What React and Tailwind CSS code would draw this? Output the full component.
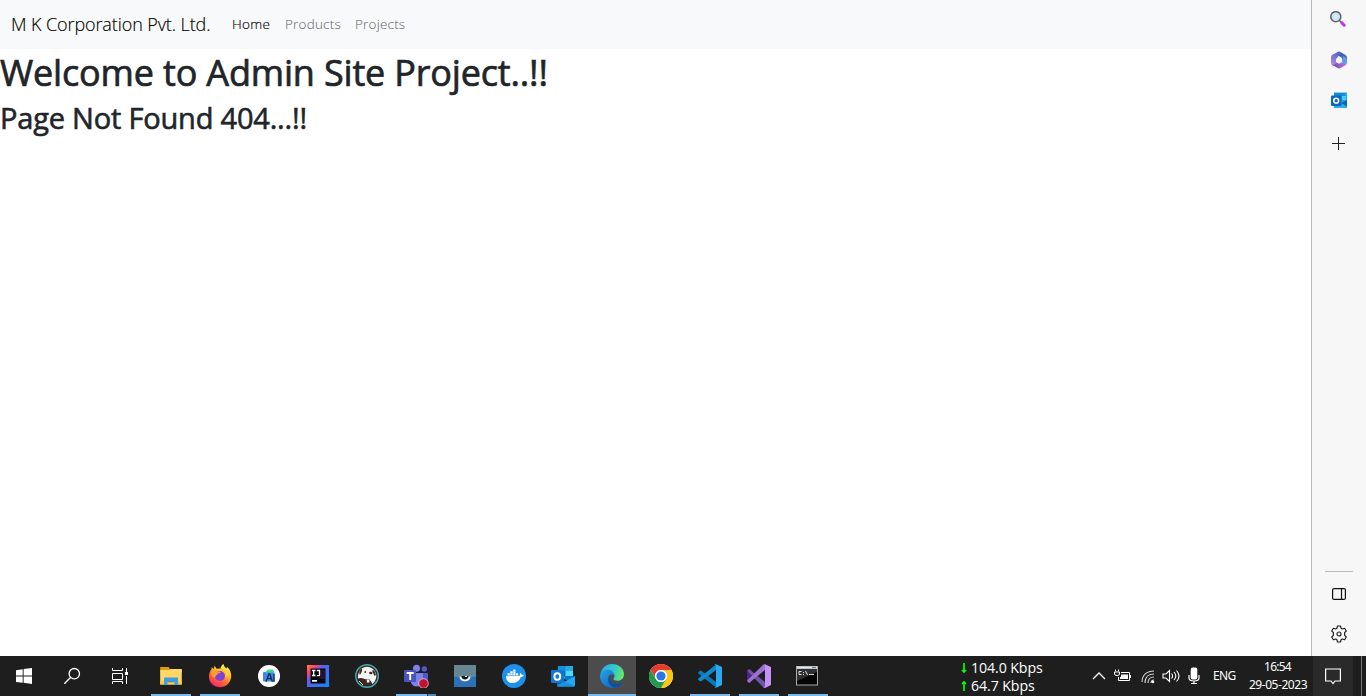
import React from 'react';

function Svg({ children, className = 'w-6 h-6', box = '0 0 24 24' }) {
  return <svg className={`block shrink-0 ${className}`} viewBox={box} fill="none">{children}</svg>;
}

const WindowsLogo = () => (
  <Svg><path fill="#fff" d="M4 6.2 10.7 5.2V11.5H4zM11.6 5.1 20 4v7.5h-8.4zM4 12.5h6.7v6.3L4 17.9zM11.6 12.5H20V20l-8.4-1.2z" /></Svg>
);
const SearchGlyph = () => (
  <Svg><circle cx="14.3" cy="9.7" r="5.2" stroke="#fff" strokeWidth="1.3" /><path d="M10.5 13.5 4.3 19.7" stroke="#fff" strokeWidth="1.4" /></Svg>
);
const TaskView = () => (
  <Svg><path stroke="#fff" d="M4.5 4v2.5h10V4M4.5 9.5h10v6h-10zM4.5 20v-2.500h10V20M18.500 4v4M18.500 12v8" /><path fill="#fff" d="M17 8h3v3h-3z" /></Svg>
);
const Explorer = () => (
  <Svg>
    <path fill="#e29b08" d="M1.200 3h8.500l1.500 2.500H23v3H1.200z" />
    <path fill="#ffd767" d="M1.200 6h9l1.500-1H22.800v15.500H1.200z" />
    <path fill="#f9c94b" d="M1.200 17h21.600v3.500H1.200z" />
    <path fill="#3f9de0" d="M5 13.500h14V21h-3.500v-3.800h-7V21H5z" />
    <path fill="#2a7dc5" d="M8.500 17.200h7v1h-7z" />
  </Svg>
);
const Firefox = () => (
  <Svg>
    <defs>
      <linearGradient id="ffBody" x1="18" y1="2" x2="6" y2="23" gradientUnits="userSpaceOnUse"><stop stopColor="#fff04a" /><stop offset=".35" stopColor="#ffb12b" /><stop offset=".65" stopColor="#ff6037" /><stop offset="1" stopColor="#f0207a" /></linearGradient>
      <radialGradient id="ffCore"><stop stopColor="#6a4be0" /><stop offset="1" stopColor="#8c3bd8" /></radialGradient>
    </defs>
    <path fill="url(#ffBody)" d="M12.500 4.500C13 2 14.500.600 15.600 0c.2 2 1.200 3 2.800 4.500.5-.4.600-1.200.500-1.800 3 2.300 4.500 6 4.300 9.800C22.900 18.600 18 23.200 12 23.200S1 18.700 1 12.700C1 9.500 2 7 3.400 5.300L3.700 3l1.800 2 1.300-3.300 1.700 3.100z" />
    <circle cx="12" cy="12" r="5" fill="url(#ffCore)" />
    <path fill="#ff9a2e" d="M3 8c3-2.500 5.300-1.500 6.500-.5 1.700-.2 3 .2 3.500 1.200-2 .4-3.500.7-3.700 1.700-1.200.5-2 1.600-2 3L4 13z" />
    <path fill="#ffd43c" d="M13 4.500c5 1.500 6 5.500 4 9 2-.7 2.700-2 3-3.500-.2-3-2.500-5-7-5.500z" />
  </Svg>
);
const AndroidStudio = () => (
  <Svg>
    <circle cx="12" cy="12" r="11" fill="#fff" />
    <rect x="6" y="8" width="11.500" height="9.500" rx="1" fill="#4285f4" />
    <path fill="#35d983" d="M8.500 8.800C9 6.800 10.400 5.700 12.400 5.600l3.300-.1c.8 1 1.400 2 1.600 3.300z" />
    <path stroke="#073042" strokeWidth="1.300" d="m9 17.700 3-8h.7l2.700 8M10.300 14.700h4.100M17 10v8" />
  </Svg>
);
const IntelliJ = () => (
  <Svg>
    <defs><linearGradient id="ij" x1="1" y1="1" x2="23" y2="22" gradientUnits="userSpaceOnUse"><stop stopColor="#ff8a2b" /><stop offset=".22" stopColor="#ff3e76" /><stop offset=".4" stopColor="#5b60f0" /><stop offset="1" stopColor="#0b87fc" /></linearGradient></defs>
    <path fill="url(#ij)" d="M1 1h22v22H1z" /><path fill="#08070c" d="M4.500 4.500h15v15h-15z" /><path fill="#2a1030" d="M13 6h6v9h-6z" />
    <path stroke="#fff" strokeWidth="1.300" d="M6 6.500h3.500M7.700 6.500V12M6 11.500h3.500M10.800 6.500h2.700V11q0 .7-1 .7h-1.700" /><path fill="#fff" d="M6 16h5v1.700H6z" />
  </Svg>
);
const DBeaver = () => (
  <Svg>
    <circle cx="12" cy="12" r="11.300" fill="#382923" stroke="#45a9b2" strokeWidth="1.400" />
    <path fill="#f4f4f2" d="M3 14.500C2.500 10 4.500 5.500 8 3.700c4-2 7.500-1 10 1.300 2.500 2 3.600 5 3.300 8-.5 3-1.800 5.300-3.800 7-1-2.200-2.200-3.500-3.500-5-1.200.2-2.700.5-4.200 0C7.300 13.800 5 13.500 3 14.500z" />
    <path fill="#382923" d="M4.800 10.800C3.500 9 4.400 6.200 6.700 4.800c1 1 .4 2.200-.2 3.200-.5 1-.7 2-1.700 2.800zM17.500 5.700c2 .8 3.300 3 3.300 5.200-.6 1.200-1.500 1-2-.1-.4-1-.3-2-1.300-2.800z" />
    <circle cx="10.300" cy="8" r=".9" fill="#382923" /><ellipse cx="15.800" cy="9" rx="1.700" ry="1.300" fill="#382923" />
    <path fill="#fff" d="m6 18 3 3M11.800 15.500h2.600v3h-2.600z" /><path stroke="#eee" strokeWidth=".9" d="m4 17 4 4" />
  </Svg>
);
const Teams = () => (
  <Svg className="w-[26px] h-6" box="0 0 26 24">
    <circle cx="13.500" cy="4.300" r="3.500" fill="#7b83eb" /><circle cx="21.300" cy="5" r="2.700" fill="#5059c9" />
    <path fill="#5059c9" d="M18 9h6q1 0 1 1v6q-1 4-6 4z" /><path fill="#7b83eb" d="M8 9h12v8.500q-1.500 5-6.500 5-4 0-5.500-4z" />
    <rect x="1" y="6" width="12" height="12" rx="1" fill="#4b53bc" /><path stroke="#fff" strokeWidth="1.900" d="M3.700 9h7M7.200 9v7" />
    <circle cx="20.500" cy="19.500" r="4.800" fill="#c50f2f" stroke="#e8cfd7" strokeWidth=".8" />
  </Svg>
);
const Kitematic = () => (
  <Svg>
    <path fill="#668792" d="M1 1h22v11H1z" /><path fill="#2c70b7" d="M1 12h22v11H1z" /><path fill="#4685b8" d="M1 12h22v1H1z" />
    <path fill="#fff" d="M6.500 12.500h11c0 3-2.300 4.800-5.500 4.800s-5.500-1.800-5.500-4.800z" /><path fill="#111b24" d="M8.500 12h7c.2 2.200-1.200 3.500-3.500 3.500S8.300 14.200 8.500 12z" /><path fill="#fff" d="M12 12h2v1h-2z" />
  </Svg>
);
const Docker = () => (
  <Svg>
    <circle cx="12" cy="12" r="12" fill="#1d90ed" />
    <path fill="#fff" d="M4 12h13c1-.3 1.500-1.800.8-3.200.8.3 1.500 1 1.700 2 .8-.1 1.800 0 2.400.5-.6 1.300-1.800 1.700-3 1.600C17.300 17 14.300 19 10.500 19 6.500 19 4 16.500 4 12zM5.500 9.300h2.400v2.300H5.500zM8.300 9.300h2.400v2.300H8.300zM11.100 9.300h2.400v2.300h-2.400zM13.900 9.300h2.400v2.300h-2.400zM8.300 7.300h2.400V9H8.300zM11.100 7.300h2.400V9h-2.400zM11.100 5.500h2.400v1.500h-2.400z" />
    <path stroke="#7cc1f7" strokeWidth=".4" d="M5.500 11.700h10.800M8.100 9.300v2.400M10.900 7.500v4.200M13.700 9.300v2.400" />
  </Svg>
);
const Outlook = ({ className }) => (
  <Svg className={className}>
    <path fill="#1490df" d="M7 2h15v13H7z" /><path fill="#28a8ea" d="M14.500 2H22v5h-7.500z" /><path fill="#0364b8" d="M7 7h7.500v5H7z" /><path fill="#50d9ff" d="M14.500 7H22v5h-7.500z" /><path fill="#0078d4" d="M14.500 12H22v4h-7.500z" />
    <path fill="#1268ad" d="m6 12 9 6 9-6v10H6z" /><path fill="#28a8ea" d="M6 22 24 12v9q0 1.500-1.500 1.500h-15Q6 22.500 6 22z" /><path fill="#1595dd" d="m14 17.500 10 4.500q-.5.500-1.500.5h-15z" />
    <rect y="6" width="13" height="13" rx="1" fill="#0f78d4" /><ellipse cx="6.300" cy="12.500" rx="2.900" ry="3.200" stroke="#fff" strokeWidth="2" />
  </Svg>
);
const OutlookSmall = () => (
  <Svg className="w-4 h-[17px]" box="0 0 16 17">
    <path fill="#26a5e6" d="M3 .5h13V16H3z" /><path fill="#158bd5" d="M3 1h11v3H3z" /><path fill="#45d0f8" d="M11 4h4v4h-4z" />
    <path fill="#0f66b0" d="m10 11 6-3v7z" /><path fill="#28aeea" d="M3 16v-2l7-3 6 3.500V16z" />
    <rect y="3.500" width="10.500" height="10.500" rx="1" fill="#0869bd" /><circle cx="5.200" cy="8.700" r="2.400" stroke="#fff" strokeWidth="1.500" />
  </Svg>
);
const Edge = () => (
  <Svg>
    <defs>
      <linearGradient id="eTop" x1="1" y1="6" x2="24" y2="12" gradientUnits="userSpaceOnUse"><stop stopColor="#2baee7" /><stop offset=".5" stopColor="#31c5d4" /><stop offset="1" stopColor="#6bea5c" /></linearGradient>
      <linearGradient id="eLow" x1="1" y1="9" x2="16" y2="24" gradientUnits="userSpaceOnUse"><stop stopColor="#249ae2" /><stop offset="1" stopColor="#0b65bc" /></linearGradient>
    </defs>
    <path fill="url(#eTop)" d="M.500 10C1.500 4.200 6.200 0 12 0c7 0 12 4.800 12 10.200 0 4-2.800 6.500-6.500 6.500-2.400 0-4.100-.8-4.100-1.700 0-.7 1.100-1.200 1.100-3C14.500 9.500 12.500 7.500 9 7.500z" />
    <path fill="url(#eLow)" d="M0 12C.4 8.300 3.500 5.800 7.500 5.800c4 0 7 2.500 7 6.200-.7-1-2-1.700-3.200-1.500C8.600 11 8.700 14 10 16.200c2.500 4 8 4.700 12 2.500.5-.3 1 0 .7.600C20.500 22.200 16.500 24 12.500 24 5.500 24 0 18.500 0 12z" />
    <path fill="#154f9b" d="M10.800 10.500C7 12 7.200 19 11.500 22c1.200 1 2.500 1.500 4 1.600 3-.6 5.500-2 7-4.200.3-.6-.2-.9-.7-.6-4 1.900-8.800 1.200-11.300-2.300-1.500-2.300-1.300-5 .3-6z" />
  </Svg>
);
const Chrome = () => (
  <Svg>
    <circle cx="12" cy="12" r="12" fill="#fff" />
    <path fill="#e63b2e" d="M1.600 6A12 12 0 0 1 22.400 6H12A6 6 0 0 0 6.800 15z" />
    <path fill="#fbc616" d="M22.400 6A12 12 0 0 1 12 24l5.200-9A6 6 0 0 0 12 6z" />
    <path fill="#239b4a" d="M12 24A12 12 0 0 1 1.600 6l5.200 9A6 6 0 0 0 17.200 15z" />
    <circle cx="12" cy="12" r="6" fill="#fff" /><circle cx="12" cy="12" r="4.600" fill="#2878e8" />
  </Svg>
);
const VSCode = () => (
  <Svg>
    <path fill="#0879bd" d="M.300 8.200 2 6.700q.700-.500 1.300 0L18 18v5.500L.300 9.500q-.600-.700 0-1.300z" />
    <path fill="#1187ce" d="M.300 15.800 2 17.300q.700.500 1.300 0L18 6V.5L.300 14.500q-.600.700 0 1.300z" />
    <path fill="#2aa8f2" d="M18 .2 24 3v18l-6 2.800c-.7.200-1 .1-1.500-.3.900.2 1.500-.3 1.500-1.200V1.700c0-.9-.6-1.400-1.500-1.200.4-.4.900-.5 1.500-.3z" />
  </Svg>
);
const VisualStudio = () => (
  <Svg>
    <path fill="#52218a" d="m0 6 2-1 2.500 1.200V18L2 19l-2-1z" />
    <path fill="#7252aa" d="m2 5 16 13v5.500q-1 .500-1.800-.200L.800 7.500z" />
    <path fill="#9a71d0" d="M2 19 18 6V.5q-1-.500-1.800.2L0 16.500z" />
    <path fill="#c391f7" d="m18 .2 6 2.700v18.200L18 24q-1 .200-1.700-.6c1 .2 1.700-.3 1.700-1.300V1.900c0-1-.7-1.500-1.700-1.300Q17 0 18 .200z" />
  </Svg>
);
const Terminal = () => (
  <Svg className="mr-0.5 w-6 h-6">
    <path fill="#a5aab1" d="M1 2h22v19.500H1z" /><path fill="#dfe3e8" d="M2 2.500h20v2H2z" /><path fill="#68788e" d="M17 3h4v1h-4z" /><path fill="#050505" d="M2 5h20v15.500H2z" /><path fill="#303030" d="M2 5h20v3L2 17z" />
    <path stroke="#eee" strokeWidth=".9" d="M6.500 7.500H4v3h2.500M8.500 8v1M8.500 10v1M10.500 7l2 4M14 10.500h5" />
  </Svg>
);

const apps = [
  [Explorer, 1], [Firefox, 1], [AndroidStudio, 0], [IntelliJ, 0], [DBeaver, 0], [Teams, 3], [Kitematic, 0],
  [Docker, 0], [Outlook, 0], [Edge, 2], [Chrome, 0], [VSCode, 1], [VisualStudio, 1], [Terminal, 1],
];

function Taskbar() {
  return (
    <footer className="flex h-10 shrink-0 bg-[#1e1e1e] font-['Noto_Sans',sans-serif] text-white whitespace-nowrap">
      {[WindowsLogo, SearchGlyph, TaskView].map((I, i) => <button key={i} className="flex w-12 items-center justify-center"><I /></button>)}
      <div className="flex gap-px pl-[3px]">
        {apps.map(([Icon, state], i) => (
          <button key={i} className={`flex w-12 flex-col items-center ${state === 2 ? 'bg-[#4c4c4c]' : ''}`}>
            <span className="flex h-[38px] items-center pt-0.5"><Icon /></span>
            {state > 0 && <span className={`flex h-0.5 bg-[#76b9ed] ${state === 2 ? 'w-12' : 'w-10'}`}>{state === 3 && <i className="ml-auto h-0.5 w-[9px] border-l border-[#304658] bg-[#5687ac]" />}</span>}
          </button>
        ))}
      </div>
      <div className="ml-auto flex w-[406px]">
        <div className="flex w-[132px] flex-col pt-[3px] text-[14.2px] leading-[18px] font-[Open_Sans,sans-serif]">
          <div className="flex items-center"><Svg className="w-2 h-3" box="0 0 8 12"><path stroke="#0f0" strokeWidth="1.700" d="M4 1v9M2 8l2 2 2-2" /></Svg><span className="ml-[3px] tracking-[-0.1px]">104.0 Kbps</span></div>
          <div className="flex items-center"><Svg className="w-2 h-3" box="0 0 8 12"><path stroke="#0f0" strokeWidth="1.700" d="M4 11V2M2 4l2-2 2 2" /></Svg><span className="ml-[3px] tracking-[-0.1px]">64.7 Kbps</span></div>
        </div>
        <div className="flex w-[109px] items-center">
          <Svg className="w-[14px] h-3" box="0 0 14 12"><path stroke="#fff" strokeWidth="1.300" d="m1 9 6-6 6 6" /></Svg>
          <Svg className="ml-2 w-[17px] h-[14px]" box="0 0 17 14"><path fill="#fff" d="M7 5.500h7v4.500H6V8.500l1-1z" /><path stroke="#fff" d="M7 3.500h8.500v8h-11V8M16.500 6v3M1.500.5v2M4.500.5v2M.500 3h5v2q0 1.500-2.500 1.500T.500 5z" /></Svg>
          <Svg className="ml-2.5 w-[15px] h-[15px]" box="0 0 15 15"><path stroke="#d8d8d8" strokeWidth="1.100" d="M1 13C1 6 6 2 13 2M4 14C4 8 8 5 13 5M7 14c0-4 2.500-6 6-6M10 14c0-2 1-3 3-3" /><circle cx="12" cy="13" r="1.300" fill="#fff" /></Svg>
          <Svg className="ml-[6px] w-[18px] h-4" box="0 0 18 16"><path stroke="#fff" strokeWidth="1.100" d="M1 6h3l3.500-3.500v11L4 10H1zM9.500 5.500q2.200 2.500 0 5M12 4q3.700 4 0 8M14.500 2.500q5 5.500 0 11" /></Svg>
          <Svg className="ml-2 w-3 h-[18px]" box="0 0 12 18"><rect x="2.700" y=".500" width="6.600" height="12" rx="2" fill="#fff" /><path stroke="#fff" strokeWidth="1.200" d="M1 8v3q0 3 5 3t5-3V8M6 14v2M3 16.500h6" /></Svg>
        </div>
        <div className="flex w-[45px] items-center pl-3 text-[12px]"><span className="tracking-[-0.7px]">ENG</span></div>
        <div className="flex w-[64px] flex-col items-center pt-[2px] text-[12px] leading-[18px]"><span className="mr-px tracking-[-0.75px]">16:54</span><span className="tracking-[-0.45px]">29-05-2023</span></div>
        <button className="ml-[3px] flex h-10 w-10 items-center justify-center bg-[#2a2a2a]"><Svg className="w-4 h-[17px]" box="0 0 16 17"><path stroke="#fff" strokeWidth="1.200" d="M.600 1h14.800v12H10l-2 2.500L6 13H.600z" /></Svg></button>
        <div className="ml-2 w-px bg-[#777]" />
      </div>
    </footer>
  );
}

const MagnifierColor = () => (
  <Svg className="w-4 h-4" box="0 0 16 16"><path stroke="#c332eb" strokeWidth="3" strokeLinecap="round" d="m11.700 11.700 2.500 2.500" /><path stroke="#666" strokeWidth="1.500" d="m9 9 2 2" /><circle cx="5.800" cy="5.700" r="5" fill="#cbe9fa" stroke="#666" strokeWidth="1.600" /></Svg>
);
const M365 = () => (
  <Svg className="w-4 h-[18px]" box="0 0 17 18">
    <defs><linearGradient id="mP" x1="0" y1="14" x2="17" y2="14" gradientUnits="userSpaceOnUse"><stop stopColor="#6446a9" /><stop offset="1" stopColor="#c277db" /></linearGradient><linearGradient id="mL" x1="8" y1="0" x2="0" y2="13" gradientUnits="userSpaceOnUse"><stop stopColor="#5263c2" /><stop offset="1" stopColor="#ad8bea" /></linearGradient></defs>
    <path fill="url(#mL)" d="M7 .5q1.500-.9 3 0L7 6v6.500L2 15q-2-1-2-3V6.200q0-1.800 1.500-2.700z" />
    <path fill="#3d64bd" d="M10 .5 15 3.500q2 1 2 3v5L11.500 9V6.700L7 4z" /><path fill="#5f9ee6" d="M13 5q4 1 4 4v3.500q-1 1.500-3 .5l-3-2z" />
    <path fill="url(#mP)" d="M1 13.500q1.500 1 3 0l5-3 7.500 3q-.5.700-1.500 1.400L10 17.500q-1.500.8-3 0L2 14.500z" /><path fill="#f7f7f7" d="m8.500 5.800 3.200 1.800v3.600l-3.200 1.800-3.200-1.800V7.600z" />
  </Svg>
);

function Sidebar() {
  return (
    <aside className="flex w-[55px] flex-col items-center border-l border-[#b8b8b8] bg-[#f7f7f7]">
      <button className="mr-[2px] flex h-10 w-10 items-center justify-center pb-[3px]"><MagnifierColor /></button>
      <button className="mr-px flex h-10 w-10 items-center justify-center"><M365 /></button>
      <button className="mr-px flex h-10 w-10 items-center justify-center"><OutlookSmall /></button>
      <button className="mt-[3px] mr-[2px] flex h-10 w-10 items-center justify-center"><Svg className="w-[13px] h-[13px]" box="0 0 13 13"><path stroke="#222" d="M6.500 0v13M0 6.500h13" /></Svg></button>
      <div className="mt-auto h-px w-7 bg-[#b8b8b8]" />
      <button className="mt-[2px] flex h-10 w-10 items-center justify-center"><Svg className="w-[14px] h-3" box="0 0 14 12"><rect x=".600" y=".600" width="12.800" height="10.800" rx="1.500" stroke="#111" strokeWidth="1.200" /><path stroke="#111" strokeWidth="1.200" d="M9.500 1v10" /></Svg></button>
      <button className="mb-[2px] flex h-10 w-10 items-center justify-center"><Svg className="w-[18px] h-[18px]" box="0 0 18 18"><path stroke="#222" strokeWidth="1.200" strokeLinejoin="round" d="M7.500 1h3l.6 2.300 1.200.7 2.300-.7 1.700 2.700-1.700 1.700v2.600l1.700 1.700-1.700 2.700-2.300-.7-1.200.7-.6 2.300h-3l-.6-2.300-1.200-.7-2.300.7L1.700 12l1.700-1.700V7.700L1.700 6l1.700-2.700 2.300.7 1.200-.7z" /><circle cx="9" cy="9" r="2" stroke="#222" strokeWidth="1.200" /></Svg></button>
    </aside>
  );
}

export default function App() {
  return (
    <div className="flex h-[696px] w-[1366px] flex-col overflow-hidden bg-white">
      <div className="flex min-h-0 flex-1">
        <main className="min-w-0 flex-1 font-[Open_Sans,'Noto_Sans',sans-serif] whitespace-nowrap text-[#212529]">
          <nav className="flex h-[49px] items-center bg-[#f8f9fa] pl-[11px] font-light">
            <a className="w-[221px] text-[18px] tracking-[-0.1px] text-black [-webkit-text-stroke:0.15px_#000]">M K Corporation Pvt. Ltd.</a>
            <a className="w-[53px] text-[13.500px] tracking-[0.3px] text-black [-webkit-text-stroke:0.15px_#000]">Home</a>
            <a className="w-[70px] text-[13.500px] tracking-[0.2px] text-[#606161]">Products</a>
            <a className="text-[13.500px] tracking-[0.2px] text-[#606161]">Projects</a>
          </nav>
          <h1 className="mt-[2px] text-[36px] leading-[43px] font-normal tracking-[-0.17px] [-webkit-text-stroke:0.7px_#212529]">Welcome to Admin Site Project..!!</h1>
          <h2 className="mt-[6px] text-[29px] leading-[36px] font-normal tracking-[-0.2px] [-webkit-text-stroke:0.6px_#212529]">Page Not Found 404...!!</h2>
        </main>
        <Sidebar />
      </div>
      <Taskbar />
    </div>
  );
}
